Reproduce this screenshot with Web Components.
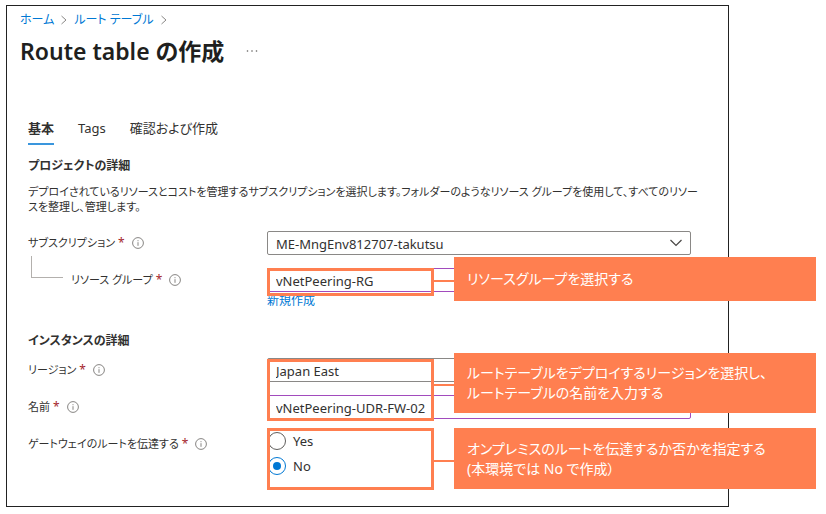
<!DOCTYPE html>
<html lang="ja">
<head>
<meta charset="utf-8">
<meta name="viewport" content="width=device-width, initial-scale=1">
<title>Route table の作成</title>
<style>
  body {
    margin: 0;
    padding: 5px 10px 8px 6px;
    background: #fff;
    color: #323130;
    font: 12px/16px "Noto Sans", "Noto Sans CJK JP", sans-serif;
    font-feature-settings: "palt";
    --link: #0078d4;
    --line: #8a8886;
    --changed: #a24bbd;
    --note: #ff7f50;
  }

  p {
    margin: 0;
  }
</style>
</head>
<body>
<portal-blade>
  <bread-crumb slot="path"></bread-crumb>
  <span slot="title">Route table の作成</span>
  <tab-strip slot="tabs"></tab-strip>

  <form-section heading="プロジェクトの詳細">
    <p slot="intro">デプロイされているリソースとコストを管理するサブスクリプションを選択します。フォルダーのようなリソース グループを使用して、すべてのリソースを整理し、管理します。</p>
    <select-field label="サブスクリプション" value="ME-MngEnv812707-takutsu"></select-field>
    <select-field label="リソース グループ" value="vNetPeering-RG" link="新規作成" nested changed></select-field>
    <step-note slot="notes" class="group">リソースグループを選択する</step-note>
  </form-section>

  <form-section heading="インスタンスの詳細">
    <select-field label="リージョン" value="Japan East"></select-field>
    <text-field label="名前" value="vNetPeering-UDR-FW-02" changed></text-field>
    <radio-field label="ゲートウェイのルートを伝達する" options="Yes,No" value="No"></radio-field>
    <step-note slot="notes" class="name">ルートテーブルをデプロイするリージョンを選択し、<br>ルートテーブルの名前を入力する</step-note>
    <step-note slot="notes" class="gateway">オンプレミスのルートを伝達するか否かを指定する<br>(本環境では No で作成）</step-note>
  </form-section>
</portal-blade>

<script>
class PortalBlade extends HTMLElement {
  constructor() {
    super();
    this.attachShadow({ mode: 'open' });
    this.shadowRoot.innerHTML = `
      <style>
        :host {
          display: block;
          margin-right: 87px;
          padding: 6px 37px 24px 21px;
          border: 1px solid #222;
        }

        header {
          display: flex;
          align-items: center;
          gap: 22px;
          margin: 6px 0 50px -8px;
        }

        h1 {
          margin: 0;
          color: #201f1e;
          font-size: 23px;
          font-weight: 600;
          line-height: 34px;
        }

        button {
          padding: 0;
          border: 0;
          background: none;
          line-height: 0;
          cursor: pointer;
        }
      </style>
      <slot name="path"></slot>
      <header>
        <h1><slot name="title"></slot></h1>
        <button type="button" aria-label="その他">
          <svg width="12" height="4" viewBox="0 0 12 4" fill="#605e5c">
            <circle cx="1.5" cy="2" r=".8"/><circle cx="6" cy="2" r=".8"/><circle cx="10.5" cy="2" r=".8"/>
          </svg>
        </button>
      </header>
      <slot name="tabs"></slot>
      <slot></slot>
    `;
  }
}

class BreadCrumb extends HTMLElement {
  constructor() {
    super();
    this.attachShadow({ mode: 'open' });
    this.shadowRoot.innerHTML = `
      <style>
        :host {
          display: block;
          margin-left: -8px;
        }

        nav {
          display: flex;
          align-items: center;
          gap: 7px;
        }

        a {
          color: var(--link);
          text-decoration: none;
        }
      </style>
      <nav>
        <a href="#">ホーム</a>
        <svg width="6" height="10" viewBox="0 0 6 10" fill="none" stroke="#8a8886"><path d="M.5 1l4.5 4-4.5 4"/></svg>
        <a href="#">ルート テーブル</a>
        <svg width="6" height="10" viewBox="0 0 6 10" fill="none" stroke="#8a8886"><path d="M.5 1l4.5 4-4.5 4"/></svg>
      </nav>
    `;
  }
}

class TabStrip extends HTMLElement {
  constructor() {
    super();
    this.attachShadow({ mode: 'open' });
    this.shadowRoot.innerHTML = `
      <style>
        :host {
          display: flex;
          gap: 24px;
        }

        button {
          padding: 0 0 5px;
          border: 0;
          border-bottom: 2px solid transparent;
          background: none;
          color: inherit;
          font: inherit;
          font-size: 13px;
          line-height: 20px;
          font-feature-settings: inherit;
          cursor: pointer;
        }

        .current {
          border-color: #3a96dd;
          font-weight: 700;
        }
      </style>
      <button type="button" class="current">基本</button>
      <button type="button">Tags</button>
      <button type="button">確認および作成</button>
    `;
  }
}

class FormSection extends HTMLElement {
  constructor() {
    super();
    this.attachShadow({ mode: 'open' });
    this.shadowRoot.innerHTML = `
      <style>
        :host {
          display: block;
          position: relative;
          margin-top: 10px;
        }

        :host(:last-of-type) {
          margin-top: 21px;
        }

        h2 {
          margin: 0 0 6px;
          font-size: 12px;
          font-weight: 700;
          line-height: 22px;
        }

        .intro {
          display: block;
          margin-right: -12px;
        }

        .intro::slotted(*) {
          padding: 1px 0 17px;
          font-size: 11px;
          line-height: 15px;
          line-break: strict;
        }

        .fields {
          display: grid;
          gap: 13px;
        }
      </style>
      <h2>${this.getAttribute('heading')}</h2>
      <slot name="intro" class="intro"></slot>
      <div class="fields"><slot></slot></div>
      <slot name="notes"></slot>
    `;
  }
}

// Shared label column; subclasses supply the control
class FormField extends HTMLElement {
  constructor() {
    super();
    this.attachShadow({ mode: 'open' });
    this.shadowRoot.innerHTML = `
      <style>
        :host {
          display: grid;
          grid-template-columns: 239px 1fr;
          align-items: start;
        }

        .label {
          display: flex;
          align-items: center;
          gap: 3px;
          height: 24px;
          font-size: 11px;
        }

        .required {
          color: #a4262c;
          font-size: 12px;
        }

        .info {
          margin-left: 4px;
          padding: 0;
          border: 0;
          background: none;
          line-height: 0;
          cursor: pointer;
        }

        .branch {
          align-self: start;
          box-sizing: border-box;
          width: 32px;
          height: 22px;
          margin: -12px 5px 0 3px;
          border: solid #b3b0ad;
          border-width: 0 0 1px 1px;
        }

        .control {
          position: relative;
        }

        select, input.text {
          display: block;
          box-sizing: border-box;
          width: 100%;
          height: 24px;
          padding: 1px 8px 0;
          border: 1px solid var(--line);
          border-radius: 2px;
          background: #fff;
          color: inherit;
          font: inherit;
          font-size: 13px;
          appearance: none;
        }

        :host([changed]) select, :host([changed]) input.text {
          border-color: var(--changed);
        }

        .chevron {
          position: absolute;
          top: 8px;
          right: 9px;
          pointer-events: none;
        }

        a {
          display: block;
          margin-top: 1px;
          color: var(--link);
          text-decoration: none;
        }

        .option {
          display: flex;
          align-items: center;
          gap: 7px;
          height: 18px;
          margin-bottom: 7px;
          font-size: 13px;
        }

        .option input {
          display: grid;
          place-content: center;
          box-sizing: border-box;
          width: 18px;
          height: 18px;
          margin: 0 0 0 1px;
          border: 1px solid #605e5c;
          border-radius: 50%;
          appearance: none;
        }

        .option input:checked {
          border-color: var(--link);
        }

        .option input:checked::before {
          content: "";
          width: 8px;
          height: 8px;
          border-radius: 50%;
          background: var(--link);
        }
      </style>
      <div class="label">
        ${this.hasAttribute('nested') ? '<span class="branch"></span>' : ''}
        <label id="label" for="control">${this.getAttribute('label')}</label>
        <span class="required">*</span>
        <button type="button" class="info" aria-label="情報">
          <svg width="12" height="12" viewBox="0 0 12 12" fill="none" stroke="#797775">
            <circle cx="6" cy="6" r="5.4" stroke-width=".9"/><path d="M6 5.2v3.6M6 3.2v1" stroke-width=".9"/>
          </svg>
        </button>
      </div>
      <div class="control">${this.control()}</div>
    `;
  }
}

class SelectField extends FormField {
  control() {
    const link = this.getAttribute('link');
    return `
      <select id="control"><option>${this.getAttribute('value')}</option></select>
      <svg class="chevron" width="12" height="8" viewBox="0 0 12 8" fill="none" stroke="#484644" stroke-width="1.2"><path d="M.5 1L6 6.5 11.5 1"/></svg>
      ${link ? `<a href="#">${link}</a>` : ''}
    `;
  }
}

class TextField extends FormField {
  control() {
    return `<input id="control" class="text" type="text" value="${this.getAttribute('value')}">`;
  }
}

class RadioField extends FormField {
  control() {
    const value = this.getAttribute('value');
    return this.getAttribute('options').split(',').map((option, i) => `
      <label class="option">
        <input type="radio" name="choice" ${i === 0 ? 'id="control"' : ''} ${option === value ? 'checked' : ''}>${option}
      </label>
    `).join('');
  }
}

// Outline around the controls, a connector, and the instruction beside it
class StepNote extends HTMLElement {
  constructor() {
    super();
    this.attachShadow({ mode: 'open' });
    this.shadowRoot.innerHTML = `
      <style>
        :host {
          display: grid;
          grid-template-columns: 167px 20px 1fr;
          align-items: start;
          position: absolute;
          left: 239px;
          right: -125px;
          pointer-events: none;
        }

        :host(.group) {
          top: 102px;
          --outline-top: 11px;
          --outline: 28px;
          --line-top: 23px;
          --text: 44px;
        }

        :host(.name) {
          top: 23px;
          --outline-top: 6px;
          --outline: 62px;
          --line-top: 31px;
          --text: 60px;
        }

        :host(.gateway) {
          top: 98px;
          --outline: 62px;
          --line-top: 32px;
          --text: 61px;
        }

        .outline {
          box-sizing: border-box;
          height: var(--outline);
          margin-top: var(--outline-top, 0);
          border: 3px solid var(--note);
        }

        .line {
          height: 2px;
          margin-top: var(--line-top);
          background: var(--note);
        }

        .text {
          display: flex;
          align-items: center;
          box-sizing: border-box;
          height: var(--text);
          padding: 0 13px;
          background: var(--note);
          color: #fff;
          font-size: 14px;
          line-height: 20px;
        }
      </style>
      <div class="outline"></div>
      <div class="line"></div>
      <div class="text"><div><slot></slot></div></div>
    `;
  }
}

customElements.define('portal-blade', PortalBlade);
customElements.define('bread-crumb', BreadCrumb);
customElements.define('tab-strip', TabStrip);
customElements.define('form-section', FormSection);
customElements.define('select-field', SelectField);
customElements.define('text-field', TextField);
customElements.define('radio-field', RadioField);
customElements.define('step-note', StepNote);
</script>
</body>
</html>
